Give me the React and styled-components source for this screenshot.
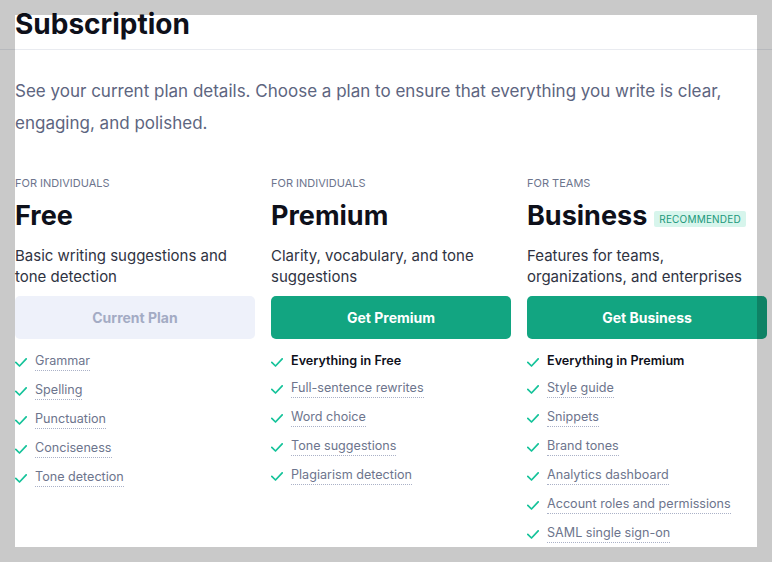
import React from "react";
import styled, { createGlobalStyle } from "styled-components";

const GlobalStyle = createGlobalStyle`
  html, body {
    margin: 0;
    padding: 0;
    background: #ffffff;
  }
  body {
    font-family: Inter, "Noto Sans", "Liberation Sans", sans-serif;
    color: #0e101a;
    -webkit-font-smoothing: antialiased;
  }
  * { box-sizing: border-box; }
`;

const Frame = styled.div`
  position: fixed;
  inset: 0;
  border: 15px solid rgba(0, 0, 0, 0.21);
  pointer-events: none;
  z-index: 10;
`;

const Header = styled.header`
  padding: 8px 15px 9px;
  border-bottom: 1px solid #e9ebf0;
`;

const Title = styled.h1`
  margin: 0;
  font-size: 28px;
  line-height: 32px;
  font-weight: 700;
  color: #0e101a;
`;

const Main = styled.main`
  padding: 0 15px;
`;

const Intro = styled.p`
  margin: 25px 0 0;
  font-size: 17px;
  line-height: 32px;
  color: #5d6580;
`;

const Plans = styled.div`
  display: grid;
  grid-template-columns: repeat(3, 240px);
  column-gap: 16px;
  margin-top: 36px;
`;

const Plan = styled.section`
  display: flex;
  flex-direction: column;
`;

const Audience = styled.div`
  font-size: 11px;
  line-height: 16px;
  text-transform: uppercase;
  color: #6d758d;
  margin-bottom: 9px;
`;

const NameRow = styled.div`
  display: flex;
  align-items: center;
  gap: 7px;
`;

const PlanName = styled.h2`
  margin: 0;
  font-size: 27px;
  line-height: 32px;
  font-weight: 700;
  color: #0e101a;
`;

const Badge = styled.span`
  margin-top: 6px;
  height: 16px;
  display: inline-flex;
  align-items: center;
  padding: 0 5px;
  border-radius: 2px;
  background: #d7f5ec;
  color: #1a987a;
  font-size: 10px;
  letter-spacing: 0.2px;
  text-transform: uppercase;
`;

const Description = styled.p`
  margin: 13px 0 0;
  font-size: 15px;
  line-height: 21px;
  color: #2f3342;
`;

const PlanButton = styled.button`
  margin-top: 9px;
  height: 43px;
  width: 100%;
  border: none;
  border-radius: 5px;
  font-family: inherit;
  font-size: 14px;
  font-weight: 700;
  cursor: ${(p) => (p.$current ? "default" : "pointer")};
  background: ${(p) => (p.$current ? "#eef1fa" : "#12a581")};
  color: ${(p) => (p.$current ? "#a3abc4" : "#ffffff")};
`;

const Features = styled.ul`
  list-style: none;
  margin: 13px 0 0;
  padding: 0;
  display: flex;
  flex-direction: column;
  gap: 10px;
`;

const Feature = styled.li`
  display: flex;
  align-items: flex-start;
  gap: 8px;
`;

const CheckWrap = styled.span`
  flex: none;
  width: 12px;
  height: 17px;
  display: flex;
  align-items: center;
  padding-top: 3px;
`;

const FeatureText = styled.span`
  display: inline-block;
  font-size: 12.6px;
  line-height: 17px;
  ${(p) =>
    p.$strong
      ? `font-weight: 600; color: #0e101a;`
      : `color: #6d758d; padding-bottom: 1px; border-bottom: 1px dotted #aab1c7;`}
`;

const Check = () => (
  <svg width="12" height="9" viewBox="0 0 12 9" fill="none">
    <path
      d="M0.8 4.3L4.5 8L11.2 0.8"
      stroke="#15c39a"
      strokeWidth="1.7"
      strokeLinecap="round"
      strokeLinejoin="round"
    />
  </svg>
);

const plans = [
  {
    audience: "For individuals",
    name: "Free",
    description: "Basic writing suggestions and tone detection",
    button: "Current Plan",
    current: true,
    features: [
      { text: "Grammar" },
      { text: "Spelling" },
      { text: "Punctuation" },
      { text: "Conciseness" },
      { text: "Tone detection" },
    ],
  },
  {
    audience: "For individuals",
    name: "Premium",
    description: "Clarity, vocabulary, and tone suggestions",
    button: "Get Premium",
    features: [
      { text: "Everything in Free", strong: true },
      { text: "Full-sentence rewrites" },
      { text: "Word choice" },
      { text: "Tone suggestions" },
      { text: "Plagiarism detection" },
    ],
  },
  {
    audience: "For teams",
    name: "Business",
    badge: "Recommended",
    description: "Features for teams, organizations, and enterprises",
    button: "Get Business",
    features: [
      { text: "Everything in Premium", strong: true },
      { text: "Style guide" },
      { text: "Snippets" },
      { text: "Brand tones" },
      { text: "Analytics dashboard" },
      { text: "Account roles and permissions" },
      { text: "SAML single sign-on" },
    ],
  },
];

export default function App() {
  return (
    <>
      <GlobalStyle />
      <Header>
        <Title>Subscription</Title>
      </Header>
      <Main>
        <Intro>
          See your current plan details. Choose a plan to ensure that everything
          you write is clear, engaging, and polished.
        </Intro>
        <Plans>
          {plans.map((plan) => (
            <Plan key={plan.name}>
              <Audience>{plan.audience}</Audience>
              <NameRow>
                <PlanName>{plan.name}</PlanName>
                {plan.badge && <Badge>{plan.badge}</Badge>}
              </NameRow>
              <Description>{plan.description}</Description>
              <PlanButton $current={plan.current}>{plan.button}</PlanButton>
              <Features>
                {plan.features.map((f) => (
                  <Feature key={f.text}>
                    <CheckWrap>
                      <Check />
                    </CheckWrap>
                    <FeatureText $strong={f.strong}>{f.text}</FeatureText>
                  </Feature>
                ))}
              </Features>
            </Plan>
          ))}
        </Plans>
      </Main>
      <Frame />
    </>
  );
}
